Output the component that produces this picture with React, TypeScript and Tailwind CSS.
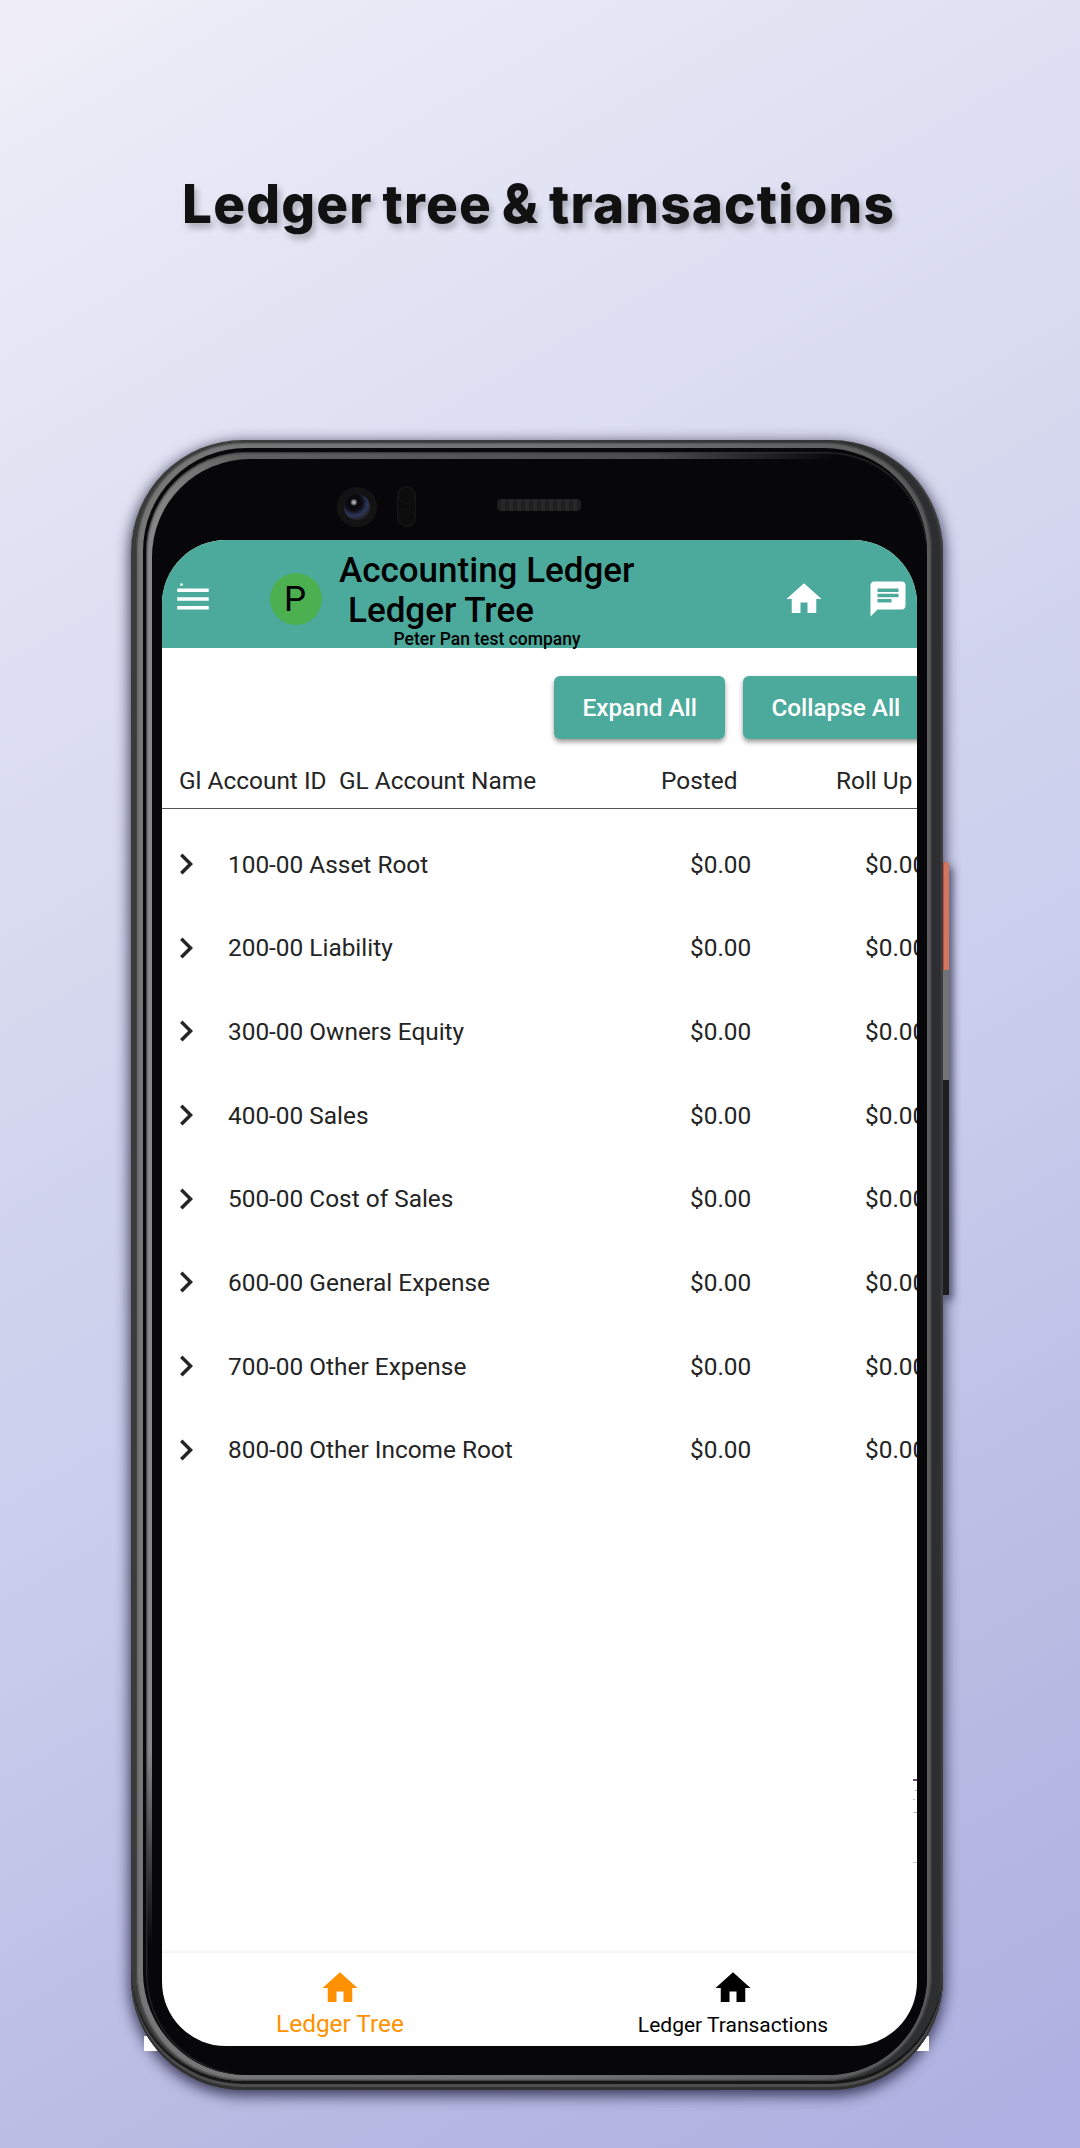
import React from "react";
import { MdChat, MdChevronRight, MdHome, MdMenu } from "react-icons/md";

const accounts = [
  "100-00 Asset Root",
  "200-00 Liability",
  "300-00 Owners Equity",
  "400-00 Sales",
  "500-00 Cost of Sales",
  "600-00 General Expense",
  "700-00 Other Expense",
  "800-00 Other Income Root",
];

function AppBar() {
  return (
    <header className="relative flex h-[108px] shrink-0 items-start bg-[#4caa9c] text-black">
      <span className="absolute left-[18px] top-[43px] size-[3px] rounded-full bg-white/80" />
      <MdMenu className="ml-[10px] mt-[38px] size-[42px] shrink-0 text-white" />
      <div className="ml-[56px] mt-[33px] flex size-[52px] shrink-0 items-center justify-center rounded-full bg-[#4caf50] pb-px text-[35px] leading-none">
        <span className="-translate-x-px translate-y-px">P</span>
      </div>
      <div className="ml-[17px] mt-[11px] w-[296px] shrink-0 font-medium">
        <div className="whitespace-pre text-[35px] leading-[40px]">Accounting Ledger</div>
        <div className="whitespace-pre pl-[9px] text-[35px] leading-[40px]">Ledger Tree</div>
        <div className="whitespace-pre pl-[54.5px] text-[17.5px] leading-[17px]">Peter Pan test company</div>
      </div>
      <MdHome className="ml-[148px] mt-[38px] size-[42px] shrink-0 text-white" />
      <MdChat className="ml-[42px] mt-[38px] size-[42px] shrink-0 text-white" />
    </header>
  );
}

function RaisedButton({ label }: { label: string }) {
  return (
    <button className="h-[63px] shrink-0 rounded-[6px] bg-[#4caa9c] px-[28.5px] pb-px text-[24.3px] font-medium text-white shadow-[0_3px_5px_rgba(0,0,0,0.4)]">
      <span className="relative top-px">{label}</span>
    </button>
  );
}

function LedgerTree() {
  return (
    <main className="flex min-h-0 flex-1 flex-col overflow-hidden text-[24.4px] text-[#242424]">
      <div className="ml-[392px] mt-[28px] flex w-[400px] gap-[17.5px]">
        <RaisedButton label="Expand All" />
        <RaisedButton label="Collapse All" />
      </div>
      <div className="mt-[26px] flex h-[44px] w-[900px] shrink-0 border-b border-[#555] pl-[17px] leading-[32px]">
        <span className="w-[160px]">Gl Account ID</span>
        <span className="w-[322px]">GL Account Name</span>
        <span className="w-[175px]">Posted</span>
        <span>Roll Up</span>
      </div>
      <div className="mt-[14px]">
        {accounts.map((name) => (
          <div key={name} className="flex h-[83.7px] w-[900px] items-center">
            <MdChevronRight className="-mt-[2px] ml-[3px] size-[42px] shrink-0" />
            <span className="ml-[21px] w-[462px]">{name}</span>
            <span className="w-[175px]">$0.00</span>
            <span>$0.00</span>
          </div>
        ))}
      </div>
    </main>
  );
}

function BottomNav() {
  return (
    <nav className="flex h-[94px] shrink-0 border-t border-[#f3f3f3] shadow-[0_-1px_3px_rgba(0,0,0,0.05)]">
      <div className="flex w-[356px] shrink-0 flex-col items-center pt-[14px] text-[24.4px] leading-[30px] text-[#ff9100]">
        <MdHome className="size-[42px]" />
        <span>Ledger Tree</span>
      </div>
      <div className="flex w-[430px] shrink-0 flex-col items-center pt-[14px] text-[21px] leading-[33px] text-black">
        <MdHome className="size-[42px]" />
        <span>Ledger Transactions</span>
      </div>
    </nav>
  );
}

function FrontSensors() {
  return (
    <div className="flex h-[81px] shrink-0 items-start">
      <div className="ml-[175px] mt-[28px] flex size-[40px] items-center justify-center rounded-full bg-[#131313]">
        <div className="size-[26px] rounded-full bg-[radial-gradient(circle_at_38%_32%,#a5a5ad_0_5%,#08080c_16%,#0c0c12_35%,#2c3458_55%,#232325_75%)]" />
      </div>
      <div className="ml-[20px] mt-[27px] flex h-[41px] w-[19px] flex-col justify-between rounded-full border border-[#171717] bg-[#0c0c0c]">
        <span className="size-[17px] rounded-full border border-[#161616]" />
        <span className="size-[17px] rounded-full border border-[#161616]" />
      </div>
      <div className="ml-[81px] mt-[40px] h-[12px] w-[84px] rounded-[4px] bg-[repeating-linear-gradient(90deg,#1e1e1e_0_4px,#272727_4px_8px)]" />
    </div>
  );
}

function Phone() {
  return (
    <div className="relative ml-[131px] mt-[195px] h-[1650px] w-[818px]">
      <div className="absolute left-0 top-0 h-[1650px] w-[812px] rounded-[112px] shadow-[0_4px_14px_2px_rgba(20,20,50,0.75)]" />
      <div className="absolute left-[13px] top-[1596px] h-[15px] w-[785px] bg-white" />
      <div className="absolute left-[811px] top-[422px] flex w-[7px] flex-col shadow-[3px_5px_8px_rgba(20,20,50,0.7)]">
        <div className="h-[108px] rounded-t-[3px] border-l-2 border-[#b5523f] bg-[#d4765f]" />
        <div className="h-[110px] bg-[#747474]" />
        <div className="h-[215px] bg-[#1e1e1e]" />
      </div>
      <div className="relative h-[1650px] w-[812px] rounded-[112px] bg-[linear-gradient(90deg,#3a3c3b_0_40%,#2c2e30_100%)] pb-[9px] pl-[5px] pr-[11px] pt-[2px] shadow-[inset_0_-3px_1px_#303030,inset_0_-6px_1px_#505050,inset_0_-9px_1px_#151515,inset_-2px_0_2px_#444]">
        <div className="h-full rounded-[108px] bg-[linear-gradient(90deg,#777_0,#707275_50%,#5a5a5a_100%)] pb-[6px] pl-[7px] pr-[5px] pt-[6px] shadow-[inset_0_0_2px_1px_#333]">
          <div className="h-full rounded-[103px] bg-[#08080a] pl-[3px] pt-[4px]">
            <div className="h-full rounded-[100px] bg-[linear-gradient(180deg,transparent_80%,#08080a_92%),linear-gradient(90deg,#8a8a8a_0,#606060_12%,#4c4c4c_65%,#08080a_88%)] pl-[6px] pt-[7px] shadow-[inset_0_0_2px_1px_#333]">
              <div className="flex h-full flex-col rounded-[98px] bg-[#070709] pl-[10px]">
                <FrontSensors />
                <div className="relative flex h-[1506px] w-[755px] flex-col overflow-hidden rounded-[64px] bg-white">
                  <AppBar />
                  <LedgerTree />
                  <BottomNav />
                  <span className="absolute right-0 top-[1239px] h-[2px] w-[4px] bg-[#6f4a78]" />
                  <span className="absolute right-0 top-[1250px] h-px w-[2px] bg-[#b9a9c6]" />
                  <span className="absolute right-[2px] top-[1259px] h-px w-[2px] bg-[#c5bccb]" />
                  <span className="absolute right-0 top-[1272px] h-px w-[3px] bg-[#b3a8c0]" />
                  <span className="absolute right-0 top-[1322px] h-px w-[4px] bg-[#c8c0d0]" />
                </div>
              </div>
            </div>
          </div>
        </div>
      </div>
    </div>
  );
}

export default function App() {
  return (
    <div className="h-[2148px] w-[1080px] overflow-hidden bg-[linear-gradient(150deg,#f0eff9_0%,#e3e4f4_16%,#d7d9ef_36%,#c9ccec_59%,#b9bbe3_80%,#adb0e1_100%)] pt-[164px] font-['Roboto',sans-serif]">
      <h1 className="ml-[182px] h-[81px] whitespace-nowrap font-['Inter'] text-[53px] font-extrabold leading-[80px] tracking-[1.2px] text-[#111] [text-shadow:3px_5px_6px_rgba(0,0,0,0.25)] [word-spacing:-3px]">
        Ledger tree &amp; transactions
      </h1>
      <Phone />
    </div>
  );
}
